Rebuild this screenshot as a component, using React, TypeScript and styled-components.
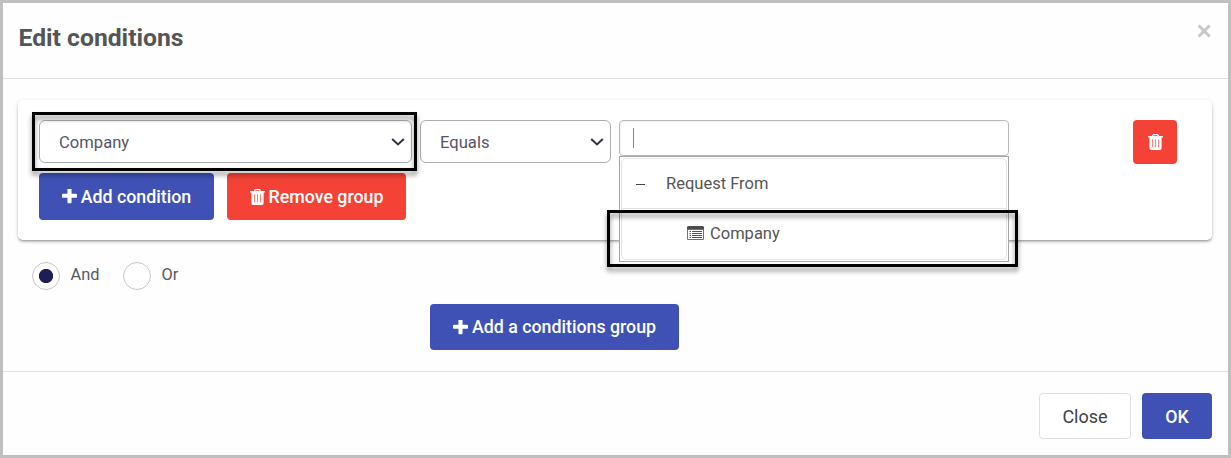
import React from "react";
import styled, { createGlobalStyle } from "styled-components";

const GlobalStyle = createGlobalStyle`
  * { box-sizing: border-box; }
  body { margin: 0; background: #fff; font-family: Roboto, "Liberation Sans", sans-serif; }
`;

const Dialog = styled.div`
  width: 1231px;
  height: 458px;
  border: 3px solid #bfbfbf;
  background: #fefefe;
  display: flex;
  flex-direction: column;
  overflow: hidden;
`;

const Header = styled.header`
  height: 76px;
  flex: none;
  padding: 19px 16px 0 15.5px;
  display: flex;
  justify-content: space-between;
  align-items: flex-start;
  border-bottom: 1px solid #e0e0e0;
`;

const Title = styled.h1`
  margin: 0;
  font-size: 24.7px;
  line-height: 32px;
  font-weight: 700;
  color: #555;
`;

const CloseIcon = styled.button`
  border: 0;
  padding: 0;
  margin: 1px 0 0;
  background: none;
  display: flex;
`;

const Body = styled.main`
  height: 293px;
  flex: none;
  padding: 21px 16px 0 15px;
  border-bottom: 1px solid #e0e0e0;
`;

const GroupCard = styled.section`
  height: 140px;
  padding: 20px 35px 0 21px;
  border-radius: 5px;
  background: #fff;
  box-shadow: 0 2px 3px -1px rgba(0, 0, 0, 0.42), 0 1px 5px rgba(0, 0, 0, 0.12);
`;

const ConditionRow = styled.div`
  display: flex;
  align-items: flex-start;
  height: 53px;
`;

const SelectSlot = styled.div`
  position: relative;
  margin-right: 8px;
`;

const Select = styled.div<{ $width: number }>`
  width: ${(p) => p.$width}px;
  height: 43px;
  padding: 2px 6px 0 19px;
  border: 1px solid #adadad;
  border-radius: 6px;
  background: #fff;
  display: flex;
  align-items: center;
  justify-content: space-between;
  font-size: 16.6px;
  line-height: 21px;
  color: #55556a;
`;

const ValueSlot = styled.div`
  position: relative;
  width: 390px;
`;

const ValueInput = styled.div`
  height: 36px;
  border: 1px solid #b9b9b9;
  border-radius: 4px;
  background: #fff;
  box-shadow: inset 1px 1px 2px rgba(0, 0, 0, 0.06);
  padding: 7px 13px;
`;

const Caret = styled.span`
  display: block;
  width: 1px;
  height: 20px;
  background: #888;
`;

const TreeMenu = styled.div`
  position: absolute;
  top: 36px;
  left: 0;
  width: 390px;
  height: 106px;
  padding: 1px;
  border: 1px solid #a5a5a5;
  background: #fff;
`;

const TreeList = styled.div`
  height: 102px;
  border: 1px solid #e4e4e4;
  border-radius: 5px;
`;

const TreeItem = styled.div<{ $level: number }>`
  height: ${(p) => (p.$level ? 48 : 50)}px;
  display: flex;
  align-items: center;
  padding-left: ${(p) => (p.$level ? 65 : 14)}px;
  border-bottom: ${(p) => (p.$level ? "0" : "1px solid #e0e0e0")};
  font-size: 16.5px;
  color: #555;
`;

const Collapse = styled.span`
  width: 9px;
  height: 1px;
  margin: 1px 21px 0 0;
  background: #444;
`;

const FormIcon = styled.svg`
  margin-right: 6px;
`;

const Highlight = styled.div<{ $top: number; $left: number; $width: number; $height: number }>`
  position: absolute;
  top: ${(p) => p.$top}px;
  left: ${(p) => p.$left}px;
  width: ${(p) => p.$width}px;
  height: ${(p) => p.$height}px;
  border: 3px solid #000;
  filter: drop-shadow(0 4px 2.5px rgba(0, 0, 0, 0.45));
  pointer-events: none;
  z-index: 2;
`;

const Button = styled.button<{ $tone: "primary" | "danger" | "plain"; $width: number; $height?: number }>`
  width: ${(p) => p.$width}px;
  height: ${(p) => p.$height ?? 46}px;
  padding: 0;
  display: flex;
  align-items: center;
  justify-content: center;
  gap: 4px;
  border: ${(p) => (p.$tone === "plain" ? "1px solid #dfdfdf" : "0")};
  border-radius: 4px;
  background: ${(p) => ({ primary: "#3f51b5", danger: "#f44336", plain: "#fff" })[p.$tone]};
  color: ${(p) => (p.$tone === "plain" ? "#424242" : "#fff")};
  font-family: inherit;
  font-size: ${(p) => (p.$tone === "plain" ? 18 : 17.8)}px;
  line-height: 20px;
  font-weight: ${(p) => (p.$tone === "plain" ? 400 : 500)};
  white-space: nowrap;
`;

const DeleteSlot = styled.div`
  margin-left: auto;
`;

const GroupActions = styled.div`
  display: flex;
  gap: 13px;
`;

const Operators = styled.div`
  display: flex;
  height: 28px;
  margin: 22px 0 14px 14px;
`;

const RadioOption = styled.label<{ $width: number }>`
  width: ${(p) => p.$width}px;
  display: flex;
  gap: 10.5px;
  font-size: 16.4px;
  line-height: 26px;
  color: #5a5a5a;
`;

const Radio = styled.span<{ $checked?: boolean }>`
  width: 28px;
  height: 28px;
  flex: none;
  border: 1px solid #c6c6c6;
  border-radius: 50%;
  background: ${(p) => (p.$checked ? "radial-gradient(circle, #1b1f55 6.7px, #fff 7.5px)" : "#fff")};
`;

const AddGroup = styled.div`
  padding-left: 412px;
`;

const Footer = styled.footer`
  display: flex;
  justify-content: flex-end;
  gap: 11px;
  padding: 21px 16px 0 0;

  ${Button} {
    padding-top: 2px;
  }
`;

const Plus = () => (
  <svg width="15" height="15" viewBox="192 192 1408 1408" fill="currentColor">
    <path d="M1600 736v192q0 40-28 68t-68 28h-416v416q0 40-28 68t-68 28h-192q-40 0-68-28t-28-68v-416h-416q-40 0-68-28t-28-68v-192q0-40 28-68t68-28h416v-416q0-40 28-68t68-28h192q40 0 68 28t28 68v416h416q40 0 68 28t28 68z" />
  </svg>
);

const Trash = () => (
  <svg width="15" height="16" viewBox="0 0 15 16" fill="currentColor">
    <path
      fillRule="evenodd"
      d="M5.600 0h3.800q.7 0 1 .6L11.100 2H14.600q.4 0 .4.4v.7q0 .4-.4.4H13.600V14q0 2-1.600 2H3q-1.600 0-1.600-2V3.500H.4Q0 3.500 0 3.100V2.400Q0 2 .4 2H3.900L4.600.6Q4.900 0 5.600 0ZM5.700 1.200 5.300 2H9.700L9.300 1.200Z"
    />
    <path stroke="#f44336" strokeOpacity="0.65" d="M4.500 5.200v8M7.500 5.200v8M10.500 5.200v8" />
  </svg>
);

const Chevron = () => (
  <svg width="14" height="9" viewBox="0 0 14 9" fill="none" stroke="#33334a" strokeWidth="2.1">
    <path d="M1.2 1 7 6.400l5.800-5.400" />
  </svg>
);

export default function App() {
  return (
    <Dialog>
      <GlobalStyle />
      <Header>
        <Title>Edit conditions</Title>
        <CloseIcon aria-label="Dismiss">
          <svg width="16" height="16" viewBox="0 0 16 16" stroke="#c8c8c8" strokeWidth="3.1">
            <path d="M2.700 2.500 13.700 13.500M13.700 2.500 2.700 13.500" />
          </svg>
        </CloseIcon>
      </Header>
      <Body>
        <GroupCard>
          <ConditionRow>
            <SelectSlot>
              <Select $width={373}>
                Company
                <Chevron />
              </Select>
              <Highlight $top={-8} $left={-7} $width={385} $height={59} />
            </SelectSlot>
            <SelectSlot>
              <Select $width={191}>
                Equals
                <Chevron />
              </Select>
            </SelectSlot>
            <ValueSlot>
              <ValueInput>
                <Caret />
              </ValueInput>
              <TreeMenu>
                <TreeList>
                  <TreeItem $level={0}>
                    <Collapse />
                    Request From
                  </TreeItem>
                  <TreeItem $level={1}>
                    <FormIcon width="17" height="14" viewBox="0 0 17 14">
                      <path fill="#4c4c4c" d="M1 0h15l1 1v3H0V1z" />
                      <path fill="#fff" stroke="#77706a" d="M.5 3.500h16v10H.5z" />
                      <path stroke="#555" d="M2.500 5.500h1.500M2.500 7.500h1.500M2.500 9.500h1.500M2.500 11.500h1.500M5 5.500h10M5 7.500h10M5 9.500h10M5 11.500h10" />
                    </FormIcon>
                    Company
                  </TreeItem>
                </TreeList>
              </TreeMenu>
              <Highlight $top={90} $left={-12} $width={411} $height={57} />
            </ValueSlot>
            <DeleteSlot>
              <Button $tone="danger" $width={44} $height={44} aria-label="Delete condition">
                <Trash />
              </Button>
            </DeleteSlot>
          </ConditionRow>
          <GroupActions>
            <Button $tone="primary" $width={175} $height={47}>
              <Plus />
              Add condition
            </Button>
            <Button $tone="danger" $width={179} $height={47}>
              <Trash />
              Remove group
            </Button>
          </GroupActions>
        </GroupCard>
        <Operators>
          <RadioOption $width={91}>
            <Radio $checked />
            And
          </RadioOption>
          <RadioOption $width={91}>
            <Radio />
            Or
          </RadioOption>
        </Operators>
        <AddGroup>
          <Button $tone="primary" $width={249}>
            <Plus />
            Add a conditions group
          </Button>
        </AddGroup>
      </Body>
      <Footer>
        <Button $tone="plain" $width={92}>
          Close
        </Button>
        <Button $tone="primary" $width={70}>
          OK
        </Button>
      </Footer>
    </Dialog>
  );
}
